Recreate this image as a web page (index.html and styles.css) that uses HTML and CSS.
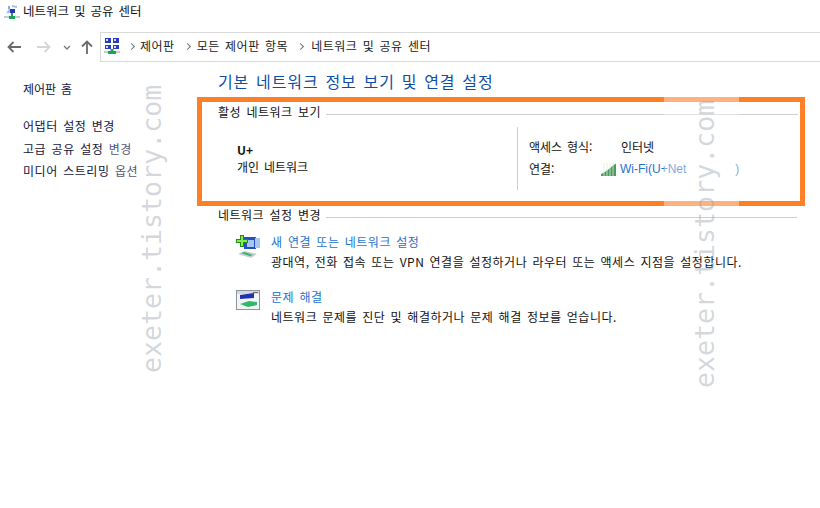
FILE: index.html
```html
<!DOCTYPE html>
<html lang="ko">
<head>
<meta charset="utf-8">
<title>네트워크 및 공유 센터</title>
<link rel="stylesheet" href="styles.css">
</head>
<body>
<header class="titlebar">
  <svg class="title-icon" width="16" height="16" viewBox="0 0 16 16"><path d="M8 1l5 1v2l-5-1zM2 9l3-4h6v4z" fill="#a9bfe0"/><rect x="6" y="5" width="5" height="4" fill="#2438b8"/><rect x="4" y="2" width="2" height="3" fill="#8fa6d6"/><rect x="0" y="12" width="16" height="2" fill="#c8ccd0"/><path d="M5 15v-3h2V9h2v3h2v3z" fill="#1aa45a"/></svg>
  <span class="title-text">네트워크 및 공유 센터</span>
</header>
<nav class="navrow">
  <div class="navbtns">
    <svg class="nav-back" width="14" height="12" viewBox="0 0 14 12"><path d="M6.500 1L1.500 6l5 5M2 6h12" fill="none" stroke="#6b6b6b" stroke-width="1.800"/></svg>
    <svg class="nav-forward" width="14" height="12" viewBox="0 0 14 12"><path d="M7.500 1l5 5-5 5M12 6H0" fill="none" stroke="#d6d6d6" stroke-width="1.800"/></svg>
    <svg class="nav-down" width="8" height="5" viewBox="0 0 8 5"><path d="M1 1l3 3 3-3" fill="none" stroke="#777" stroke-width="1.300"/></svg>
    <svg class="nav-up" width="12" height="14" viewBox="0 0 12 14"><path d="M1 6.500l5-5 5 5M6 2v12" fill="none" stroke="#6b6b6b" stroke-width="1.800"/></svg>
  </div>
  <div class="addressbar">
    <svg class="addr-icon" width="16" height="16" viewBox="0 0 16 16"><rect x="1" y="0" width="6" height="5" fill="#2a3cc0"/><rect x="9" y="0" width="6" height="5" fill="#2a3cc0"/><rect x="1" y="7" width="6" height="4" fill="#2a3cc0"/><rect x="9" y="7" width="6" height="4" fill="#2a3cc0"/><rect x="2" y="1" width="2" height="2" fill="#cfe0f5"/><rect x="10" y="1" width="2" height="2" fill="#cfe0f5"/><rect x="2" y="8" width="2" height="2" fill="#cfe0f5"/><rect x="10" y="8" width="2" height="2" fill="#cfe0f5"/><rect x="0" y="13" width="16" height="2" fill="#c8ccd0"/><path d="M4 16v-3h2.500v-2h3v2H12v3z" fill="#1aa45a"/></svg>
    <span class="crumb-sep"></span><span class="crumb crumb-a">제어판</span>
    <span class="crumb-sep"></span><span class="crumb crumb-b">모든 제어판 항목</span>
    <span class="crumb-sep"></span><span class="crumb crumb-c">네트워크 및 공유 센터</span>
  </div>
</nav>
<main class="layout">
  <aside class="sidebar">
    <a class="side-home">제어판 홈</a>
    <a class="side-link">어댑터 설정 변경</a>
    <a class="side-link">고급 공유 설정 변경</a>
    <a class="side-link">미디어 스트리밍 옵션</a>
  </aside>
  <section class="content">
    <h1 class="page-title">기본 네트워크 정보 보기 및 연결 설정</h1>
    <div class="highlight">
      <div class="group-head first"><span>활성 네트워크 보기</span><i></i></div>
      <div class="active-net">
        <div class="net-name">
          <strong>U+</strong>
          <span>개인 네트워크</span>
        </div>
        <div class="net-info">
          <div class="info-row"><span class="info-label">액세스 형식:</span><span>인터넷</span></div>
          <div class="info-row conn"><span class="info-label">연결:</span>
            <svg class="signal" width="16" height="13" viewBox="0 0 16 13"><path d="M0 13v-2l3-1.500 3-2 3-2.500 3-2.500 3-2V13z" fill="#4f9a5e"/><path d="M3 0v13M6 0v13M9 0v13M12 0v13" stroke="#d9ecd9" stroke-width=".8"/></svg>
            <a class="wifi">Wi-Fi(U+Net<span class="wifi-end">)</span></a>
          </div>
        </div>
      </div>
    </div>
    <div class="group-head second"><span>네트워크 설정 변경</span><i></i></div>
    <div class="task">
      <svg class="task-icon" width="26" height="24" viewBox="0 0 26 24"><rect x="8" y="2" width="12" height="12" fill="#2450c0"/><rect x="11" y="5" width="7" height="7" fill="#a6c8ee"/><rect x="19" y="3" width="5" height="10" fill="#a8c8ec"/><path d="M2 19l7-3 12 3-6 4z" fill="#c6cccf"/><path d="M5 18l9 3 3-1-9-3z" fill="#2fb36a"/><path d="M0 4h4V0h4v4h4v4H8v4H4V8H0z" fill="#1d8f1d"/><path d="M1 5h4V1h2v4h4v2H7v4H5V7H1z" fill="#8be84e"/></svg>
      <div class="task-body"><a class="task-link">새 연결 또는 네트워크 설정</a><p>광대역, 전화 접속 또는 VPN 연결을 설정하거나 라우터 또는 액세스 지점을 설정합니다.</p></div>
    </div>
    <div class="task">
      <svg class="task-icon" width="26" height="22" viewBox="0 0 26 22"><rect x="0.500" y="0.500" width="23" height="19" fill="#f3f4f5" stroke="#8f9499"/><rect x="1" y="1" width="22" height="3" fill="#d5d8dc"/><path d="M4 5l14-2v5L4 9z" fill="#1f33b0"/><path d="M4 14l9-3 8 1v3l-9 2z" fill="#2fb86a"/><rect x="17" y="2" width="5" height="1" fill="#6a6f75"/></svg>
      <div class="task-body"><a class="task-link">문제 해결</a><p>네트워크 문제를 진단 및 해결하거나 문제 해결 정보를 얻습니다.</p></div>
    </div>
  </section>
</main>
<div class="band band-left"></div>
<div class="band band-right"></div>
<div class="mark mark-left">exeter.tistory.com</div>
<div class="mark mark-right">exeter.tistory.com</div>
</body>
</html>
```
FILE: styles.css
```css
* { box-sizing: border-box; }
html, body { margin: 0; padding: 0; }
body {
  width: 820px;
  height: 508px;
  overflow: hidden;
  position: relative;
  background: #fff;
  color: #111;
  font-family: "Noto Sans CJK KR", "Noto Sans", sans-serif;
  font-size: 12px;
  line-height: 16px;
}
.titlebar { height: 32px; display: flex; align-items: flex-start; padding: 3px 0 0 4px; }
.title-icon { margin-top: 1px; }
.title-text { margin-left: 3px; font-size: 12.500px; word-spacing: 1.500px; }
.navrow { height: 30px; display: flex; }
.navbtns { width: 100px; position: relative; display: flex; align-items: center; padding-left: 7px; }
.nav-forward { margin-left: 16px; }
.nav-down { margin-left: 12px; }
.nav-up { margin-left: 10px; }
.addressbar {
  flex: 1;
  margin-right: -2px;
  border: 1px solid #d9d9d9;
  display: flex;
  align-items: center;
  padding: 0 0 2px 3px;
}
.addr-icon { margin-right: 9px; }
.crumb-sep {
  width: 5px;
  height: 5px;
  border-top: 1.500px solid #777;
  border-right: 1.500px solid #777;
  transform: rotate(45deg);
  flex: none;
}
.crumb { font-size: 12px; word-spacing: 1.500px; letter-spacing: 0.500px; color: #222; }
.crumb-a { margin: 0 10px 0 6px; }
.crumb-b { margin: 0 10px 0 7px; }
.crumb-c { margin-left: 8px; }
.layout { display: flex; }
.sidebar { width: 197px; padding: 19px 0 0 23px; display: flex; flex-direction: column; color: #14143c; }
.side-home { margin-bottom: 18px; line-height: 16px; word-spacing: 1.500px; }
.side-link { line-height: 22.500px; word-spacing: 1.500px; letter-spacing: 0.550px; white-space: nowrap; }
.content { width: 623px; }
.page-title {
  margin: 8px 0 0 21px;
  font-size: 16px;
  font-weight: 400;
  line-height: 22px;
  color: #0f4fa8;
  letter-spacing: 0.900px;
  word-spacing: 1.500px;
}
.highlight {
  width: 608px;
  height: 109px;
  margin-top: 5px;
  border: 5px solid #ff7f27;
  padding-left: 16px;
}
.group-head { display: flex; align-items: center; word-spacing: 1.500px; }
.group-head span { letter-spacing: 0.500px; white-space: nowrap; }
.group-head i { flex: 1; height: 1px; background: #cfcfcf; margin: 4px 2px 0 5px; }
.group-head.first { margin-top: 2px; }
.group-head.second { margin: 1px 23px 0 21px; }
.group-head.second i { margin-right: 0; margin-left: 5px; }
.active-net { display: flex; margin-top: 7px; }
.net-name { width: 299px; padding: 14px 0 0 19px; display: flex; flex-direction: column; word-spacing: 1.500px; }
.net-name strong { font-size: 12px; line-height: 17px; }
.net-name span { line-height: 17px; }
.net-info {
  height: 63px;
  border-left: 1px solid #cfcfcf;
  padding: 9px 0 0 11px;
}
.info-row { display: flex; align-items: center; height: 22px; word-spacing: 1.500px; }
.info-label { width: 92px; flex: none; }
.signal { margin: 1px 3px 0 -20px; }
.wifi { color: #2472cf; font-family: "Liberation Sans", sans-serif; white-space: nowrap; }
.wifi-end { margin-left: 49px; }
.task { display: flex; margin-left: 39px; }
.task + .task { margin-top: 19px; }
.group-head + .task { margin-top: 11px; }
.task-icon { flex: none; margin-top: 1px; margin-right: 9px; width: 26px; }
.task-body p { margin: 4px 0 0; line-height: 16px; white-space: nowrap; word-spacing: 1.300px; letter-spacing: 0.520px; }
.task-link { color: #2472cf; word-spacing: 1.500px; letter-spacing: 0.500px; display: block; line-height: 16px; }
.band { position: absolute; background: rgba(255, 255, 255, 0.4); }
.band-left { left: 108px; top: 138px; width: 75px; height: 44px; background: rgba(255, 255, 255, 0.25); }
.band-right { left: 664px; top: 90px; width: 75px; height: 120px; }
.mark {
  position: absolute;
  font-family: "DejaVu Sans Mono", monospace;
  font-size: 26.600px;
  line-height: 32px;
  color: rgba(150, 160, 170, 0.42);
  white-space: nowrap;
  transform-origin: 0 0;
  transform: rotate(-90deg);
}
.mark-left { left: 136px; top: 373px; }
.mark-right { left: 689px; top: 388px; }
```
